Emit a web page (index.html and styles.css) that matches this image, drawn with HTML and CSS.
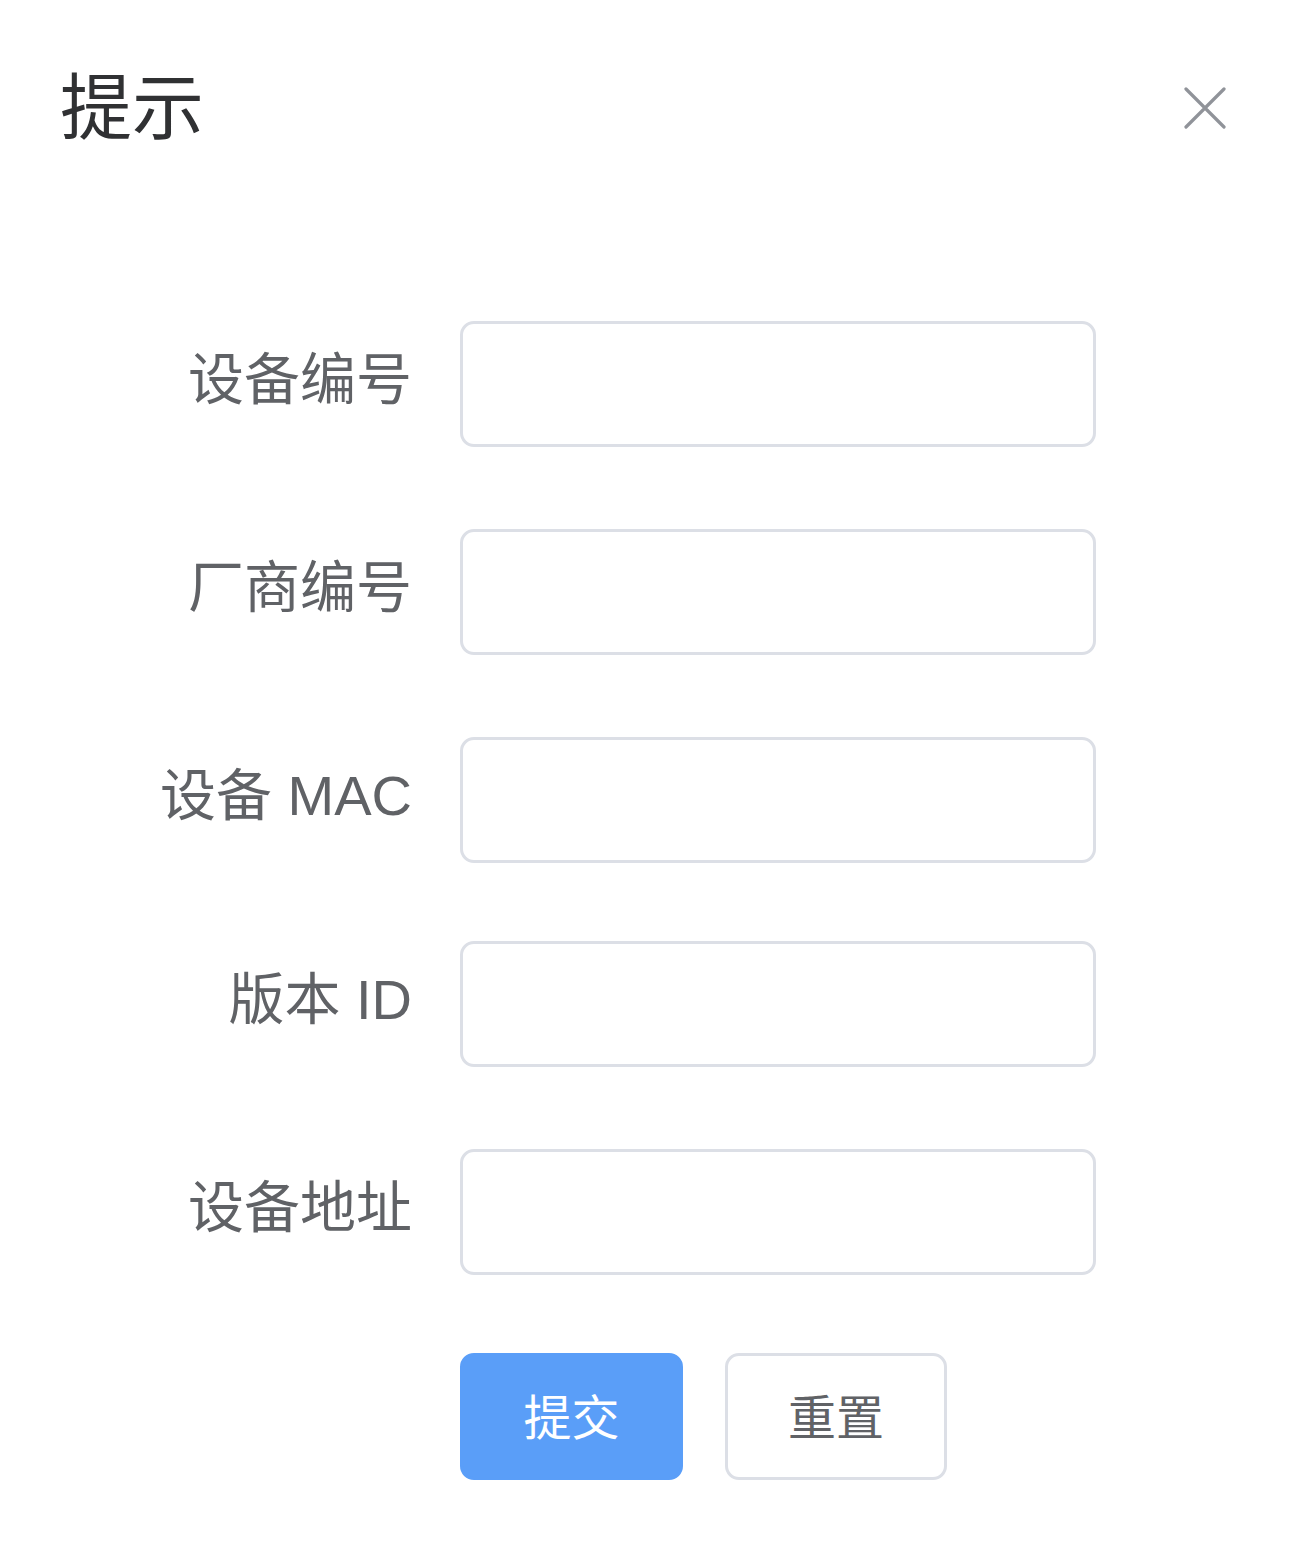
FILE: index.html
```html
<!DOCTYPE html>
<html lang="zh-CN">
<head>
<meta charset="utf-8">
<title>提示</title>
<link rel="stylesheet" href="styles.css">
</head>
<body>
<div class="dialog">
  <div class="dialog-header">
    <span class="dialog-title">提示</span>
    <button class="dialog-close" aria-label="关闭">
      <svg width="42" height="42" viewBox="0 0 42 42"><path d="M2 2 L40 40 M40 2 L2 40" stroke="#909399" stroke-width="3.2" stroke-linecap="round" fill="none"/></svg>
    </button>
  </div>
  <form class="form">
    <div class="form-item">
      <label class="form-label">设备编号</label>
      <input class="form-input" type="text">
    </div>
    <div class="form-item">
      <label class="form-label">厂商编号</label>
      <input class="form-input" type="text">
    </div>
    <div class="form-item form-item-tight">
      <label class="form-label">设备 MAC</label>
      <input class="form-input" type="text">
    </div>
    <div class="form-item">
      <label class="form-label">版本 ID</label>
      <input class="form-input" type="text">
    </div>
    <div class="form-item form-item-last">
      <label class="form-label">设备地址</label>
      <input class="form-input" type="text">
    </div>
    <div class="form-actions">
      <button type="button" class="btn btn-primary">提交</button>
      <button type="button" class="btn btn-default">重置</button>
    </div>
  </form>
</div>
</body>
</html>
```

FILE: styles.css
```css
* { box-sizing: border-box; }
html, body {
  margin: 0;
  padding: 0;
  background: #ffffff;
}
body {
  font-family: "Liberation Sans", "Noto Sans CJK SC", sans-serif;
  color: #606266;
}
.dialog {
  width: 1304px;
  min-height: 1548px;
  background: #fff;
}
.dialog-header {
  display: flex;
  justify-content: space-between;
  align-items: flex-start;
  padding: 66px 78px 0 60px;
}
.dialog-title {
  font-size: 72px;
  line-height: 72px;
  color: #303133;
  font-family: "Noto Sans CJK SC", sans-serif;
}
.dialog-close {
  border: none;
  background: transparent;
  padding: 0;
  margin-top: 21px;
  width: 42px;
  height: 42px;
  cursor: pointer;
}
.dialog-close svg { display: block; }
.form {
  padding-top: 183px;
}
.form-item {
  display: flex;
  align-items: center;
  margin-bottom: 82px;
}
.form-item-tight { margin-bottom: 78px; }
.form-item-last { margin-bottom: 78px; }
.form-label {
  width: 412px;
  text-align: right;
  font-size: 56px;
  line-height: 56px;
  padding-bottom: 8px;
  color: #606266;
  white-space: nowrap;
}
.form-input {
  margin-left: 48px;
  width: 636px;
  height: 126px;
  border: 3px solid #dcdfe6;
  border-radius: 14px;
  background: #fff;
  outline: none;
  font-size: 48px;
  padding: 0 40px;
}
.form-actions {
  display: flex;
  gap: 42px;
  padding-left: 460px;
}
.btn {
  width: 223px;
  height: 127px;
  border-radius: 14px;
  font-size: 48px;
  font-family: "Noto Sans CJK SC", sans-serif;
  padding: 0 0 6px 0;
  cursor: pointer;
  line-height: 1;
}
.btn-primary {
  background: #5a9ef8;
  border: 3px solid #5a9ef8;
  color: #ffffff;
}
.btn-default {
  width: 222px;
  background: #ffffff;
  border: 3px solid #dcdfe6;
  color: #606266;
}
```
